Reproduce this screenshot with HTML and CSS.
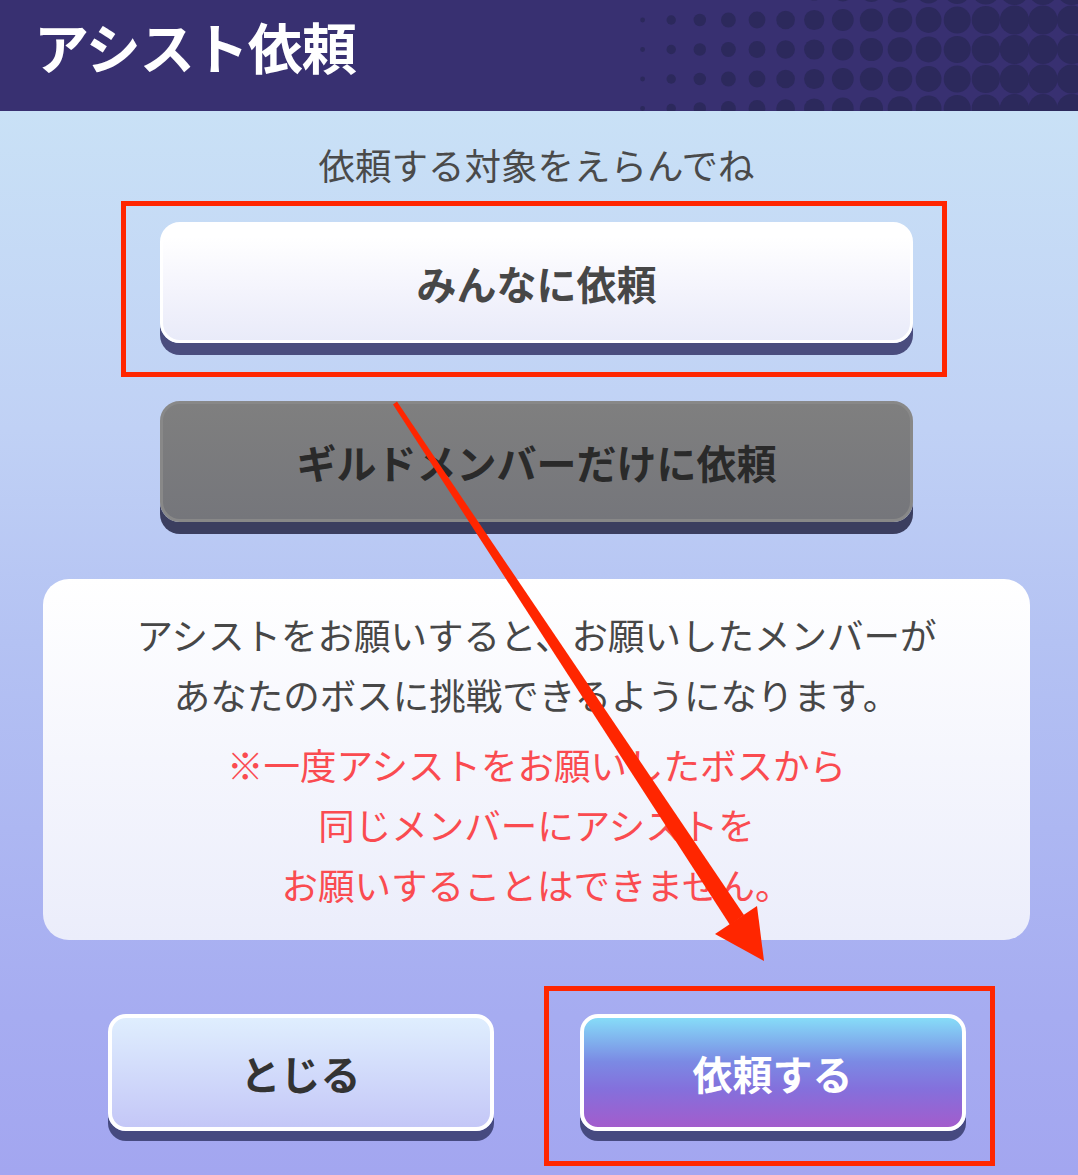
FILE: index.html
```html
<!DOCTYPE html>
<html lang="ja">
<head>
    <meta charset="utf-8">
    <meta name="viewport" content="width=device-width, initial-scale=1, maximum-scale=1">
    <title>アシスト依頼</title>
    <link rel="stylesheet" href="styles.css">
</head>
<body>
    <div class="page">
        <div class="header">
            <h1>アシスト依頼</h1>
            <svg class="dots" id="dots" width="480" height="111" viewBox="0 0 480 111"></svg>
        </div>
        <div class="content">
            <p class="lead">依頼する対象をえらんでね</p>
            <div class="choice choice-all">みんなに依頼</div>
            <div class="choice choice-guild">ギルドメンバーだけに依頼</div>
            <div class="notice">
                <p class="notice-text">アシストをお願いすると、お願いしたメンバーが<br>あなたのボスに挑戦できるようになります。</p>
                <p class="notice-warn">※一度アシストをお願いしたボスから<br>同じメンバーにアシストを<br>お願いすることはできません。</p>
            </div>
            <div class="actions">
                <div class="btn btn-close">とじる</div>
                <div class="btn btn-request">依頼する</div>
            </div>
        </div>

        <!-- annotation marks drawn over the screen -->
        <svg class="marks" width="1078" height="1175" viewBox="0 0 1078 1175">
            <rect x="123.5" y="203.5" width="821" height="171" fill="none" stroke="#ff2600" stroke-width="5"/>
            <rect x="546.5" y="988.5" width="446" height="175" fill="none" stroke="#ff2600" stroke-width="5"/>
            <polygon points="397,401.6 744,915 730,925 393,404.4" fill="#ff2600"/>
            <polygon points="757,906 764,961 715,934" fill="#ff2600"/>
        </svg>
    </div>

    <script>
        // halftone dots in the header, growing toward the right edge
        const dots = document.getElementById('dots');
        const rows = [-9.5, 20, 49.5, 79, 108.5];
        for (let cx = 16; cx < 495; cx += 28.6) {
            const pageX = 598 + cx;
            const t = Math.min(1, Math.max(0, (pageX - 632) / 380));
            const r = 14.6 * Math.pow(t, 0.5);
            if (r < 0.8) continue;
            rows.forEach(cy => {
                const c = document.createElementNS('http://www.w3.org/2000/svg', 'circle');
                c.setAttribute('cx', cx);
                c.setAttribute('cy', cy);
                c.setAttribute('r', r.toFixed(1));
                dots.appendChild(c);
            });
        }
    </script>
</body>
</html>
```

FILE: styles.css
```css
body {
    margin: 0;
    padding: 0;
    font-family: "Noto Sans CJK JP", "Noto Sans", sans-serif;
}
.page {
    position: relative;
    width: 1078px;
    height: 1175px;
    overflow: hidden;
}
.header {
    display: flex;
    height: 111px;
    padding-left: 34px;
    background-color: #383071;
}
.header h1 {
    margin: 0;
    padding-top: 18px;
    font-size: 55px;
    line-height: 1;
    font-weight: bold;
    color: #ffffff;
    letter-spacing: -1px;
}
.dots {
    margin-left: auto;
    fill: #2c295c;
}
.content {
    display: flex;
    flex-direction: column;
    align-items: center;
    height: 1064px;
    padding-right: 5px;
    background: linear-gradient(#c9e1f6 0%, #c0d1f5 30%, #b4c2f3 50%, #a6acf1 85%, #a3a6f0 100%);
}
.lead {
    margin: 29px 0 0;
    font-size: 36.5px;
    line-height: 50px;
    color: #4a4a4a;
}
.choice {
    display: flex;
    align-items: center;
    justify-content: center;
    box-sizing: border-box;
    width: 753px;
    height: 121px;
    border-radius: 20px;
    font-size: 40px;
    font-weight: bold;
}
.choice-all {
    margin-top: 32px;
    background: linear-gradient(#ffffff 10%, #f3f3fc 60%, #e9ebf9 100%);
    border: 3px solid #ffffff;
    box-shadow: 0 12px 0 #4a4d7e;
    color: #474747;
}
.choice-guild {
    margin-top: 58px;
    background: linear-gradient(#7f7f7f, #75767b);
    border: 3px solid #888888;
    box-shadow: 0 12px 0 #3b3e5f;
    color: #2a2a2a;
}
.notice {
    box-sizing: border-box;
    width: 987px;
    height: 361px;
    margin-top: 57px;
    padding: 26px 0 25px;
    border-radius: 26px;
    background: linear-gradient(#ffffff, #ebedfb);
    text-align: center;
    font-size: 36.5px;
    line-height: 60px;
}
.notice p {
    margin: 0;
}
.notice-text {
    color: #474747;
}
.notice .notice-warn {
    margin-top: 10px;
    color: #fa4b50;
}
.actions {
    display: flex;
    gap: 86px;
    margin-top: 74px;
}
.btn {
    display: flex;
    align-items: center;
    justify-content: center;
    box-sizing: border-box;
    width: 386px;
    height: 117px;
    border: 4px solid #ffffff;
    border-radius: 18px;
    box-shadow: 0 10px 0 #464a80;
    font-size: 40px;
    font-weight: bold;
}
.btn-close {
    background: linear-gradient(#dfeefe, #c4c7f7);
    color: #333333;
}
.btn-request {
    background: linear-gradient(#86dcf8 0%, #7b8ae4 40%, #8470dc 65%, #a35ccc 100%);
    color: #ffffff;
}
.marks {
    position: absolute;
    top: 0;
    left: 0;
    pointer-events: none;
}
```
